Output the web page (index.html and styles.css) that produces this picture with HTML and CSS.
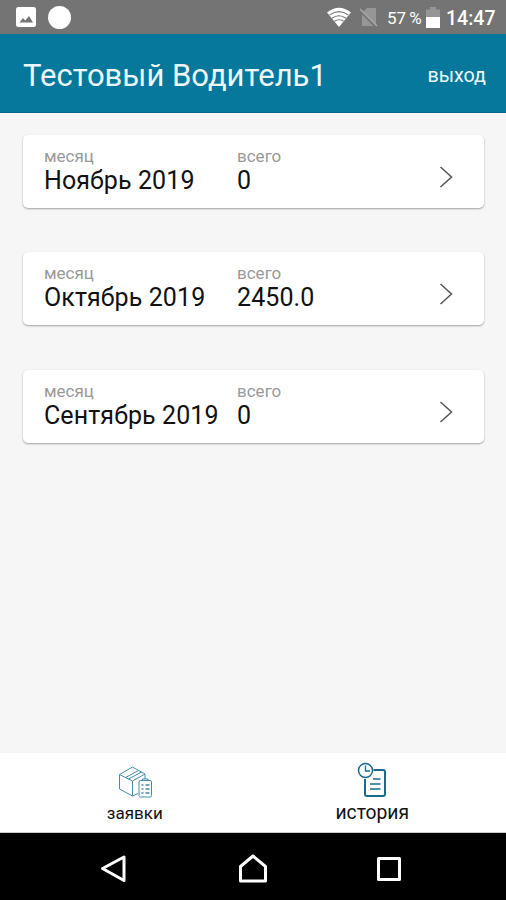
FILE: index.html
```html
<!DOCTYPE html>
<html lang="ru">
	<head>
		<meta charset="UTF-8" />
		<meta name="viewport" content="width=device-width, initial-scale=1.0" />
		<title>История</title>
		<link rel="stylesheet" href="styles.css">
	</head>
	<body>
		<div class="status-bar">
			<svg class="status-image" width="20" height="20" viewBox="0 0 20 20">
				<rect width="20" height="20" rx="2.5" fill="#fff" />
				<path d="M3.5 15.5 7 11l2.3 2.5L13 9l4 6.5z" fill="#747474" />
			</svg>
			<div class="status-dot"></div>
			<svg class="status-wifi" width="26" height="20" viewBox="0 0 26 20">
				<path d="M1 5.5Q13-4 25 5.5L13 20z" fill="#fff" />
				<path d="M3.5 8.1Q13 1.2 22.5 8.1M6 11.2Q13 6.2 20 11.2M8.5 14.2Q13 11.2 17.5 14.2" fill="none" stroke="#747474" stroke-width="1.1" />
			</svg>
			<svg class="status-sim" width="20" height="20" viewBox="0 0 20 20">
				<path d="M8 1h9v18H3V6z" fill="#969696" />
				<path d="M1 3.5 17 20" stroke="#747474" stroke-width="2.5" />
				<path d="M1 2 18 19" stroke="#a8a8a8" stroke-width="1.5" />
			</svg>
			<span class="status-percent">57 %</span>
			<svg class="status-battery" width="14" height="21" viewBox="0 0 14 21">
				<path d="M4 0h6v2.5h4V21H0V2.5h4z" fill="#969696" />
				<path d="M0 10h14v11H0z" fill="#fff" />
			</svg>
			<span class="status-time">14:47</span>
		</div>

		<div class="header">
			<h1>Тестовый Водитель1</h1>
			<a class="logout">выход</a>
		</div>

		<div class="content">
			<div class="card">
				<div class="month">
					<div class="label">месяц</div>
					<div class="value">Ноябрь 2019</div>
				</div>
				<div class="total">
					<div class="label">всего</div>
					<div class="value">0</div>
				</div>
				<svg class="arrow" width="14" height="22" viewBox="0 0 14 22">
					<path d="M1.5 1 12.5 11 1.5 21" />
				</svg>
			</div>
			<div class="card">
				<div class="month">
					<div class="label">месяц</div>
					<div class="value">Октябрь 2019</div>
				</div>
				<div class="total">
					<div class="label">всего</div>
					<div class="value">2450.0</div>
				</div>
				<svg class="arrow" width="14" height="22" viewBox="0 0 14 22">
					<path d="M1.5 1 12.5 11 1.5 21" />
				</svg>
			</div>
			<div class="card">
				<div class="month">
					<div class="label">месяц</div>
					<div class="value">Сентябрь 2019</div>
				</div>
				<div class="total">
					<div class="label">всего</div>
					<div class="value">0</div>
				</div>
				<svg class="arrow" width="14" height="22" viewBox="0 0 14 22">
					<path d="M1.5 1 12.5 11 1.5 21" />
				</svg>
			</div>
		</div>

		<div class="tabs">
			<div class="tab tab-orders">
				<svg width="36" height="36" viewBox="0 0 36 36" fill="none" stroke="#438ba8">
					<path d="M21 31.5 15.500 34 2.500 27V12.500L15.500 5 28 12v5M2.500 12.500l13 6.500L28 12M15.500 19v15M8.500 15.500 21.500 8.500M11.500 17 24.500 10" />
					<rect x="22" y="18.5" width="12.5" height="16.5" rx="1.5" />
					<path d="M25.5 18.5V17H31v1.5" />
					<path d="M24.5 23h2M28.5 23h4M24.5 27h2M28.5 27h4M24.5 31h2M28.5 31h4" stroke-width="1.5" />
				</svg>
				<span>заявки</span>
			</div>
			<div class="tab tab-history">
				<svg width="30" height="36" viewBox="0 0 30 36" fill="none" stroke="#17698f">
					<path d="M16.5 8H26a2 2 0 0 1 2 2v22a2 2 0 0 1-2 2H10a2 2 0 0 1-2-2V17" stroke-width="2" />
					<circle cx="8.5" cy="8.5" r="7" stroke-width="1.5" />
					<path d="M8.5 3.5V9H13" stroke-width="1.3" />
					<path d="M16 17h7.5M13 22h10.5M13 27h10.5" stroke-width="1.5" />
				</svg>
				<span>история</span>
			</div>
		</div>

		<div class="nav-bar">
			<svg width="28" height="30" viewBox="0 0 28 30">
				<path d="M25 3v23.5L3.5 14.5z" />
			</svg>
			<svg class="nav-home" width="30" height="30" viewBox="0 0 30 30">
				<path d="M15 2 27.5 12.5V27h-25V12.5z" />
			</svg>
			<svg width="26" height="26" viewBox="0 0 26 26">
				<rect x="2.5" y="2.5" width="21" height="21" />
			</svg>
		</div>
	</body>
</html>
```
FILE: styles.css
```css
body {
	display: flex;
	flex-direction: column;
	height: 900px;
	margin: 0;
	overflow: hidden;
	font-family: Roboto, sans-serif;
	background-color: #f6f6f6;
	color: #111;
}
svg {
	display: block;
	flex: none;
}
.status-bar {
	display: flex;
	align-items: center;
	box-sizing: border-box;
	height: 34px;
	padding: 0 11px 0 16px;
	background-color: #747474;
	color: #fff;
	white-space: nowrap;
}
.status-dot {
	width: 23px;
	height: 23px;
	margin-left: 12px;
	border-radius: 50%;
	background-color: #fff;
}
.status-wifi {
	margin-left: auto;
}
.status-sim {
	margin-left: 7px;
}
.status-percent {
	width: 35px;
	margin-left: 8px;
	margin-top: 2px;
	font-size: 17px;
	word-spacing: -1px;
}
.status-battery {
	margin-left: 4px;
}
.status-time {
	width: 49px;
	margin-left: 6px;
	margin-top: 2px;
	font-size: 19.5px;
	font-weight: 500;
}
.header {
	display: flex;
	align-items: center;
	justify-content: space-between;
	box-sizing: border-box;
	height: 79px;
	padding: 5px 20px 0 23px;
	border-bottom: 1px solid #07688a;
	background-color: #05789b;
	color: #eef8fc;
}
h1 {
	margin: 0;
	font-size: 31px;
	font-weight: 400;
}
.logout {
	font-size: 19.7px;
}
.content {
	flex: 1;
	display: flex;
	flex-direction: column;
	gap: 44.4px;
	padding: 22px 22px 0 23px;
}
.card {
	display: flex;
	box-sizing: border-box;
	height: 73px;
	padding: 11px 31px 0 21px;
	border-radius: 5px;
	background-color: #fff;
	box-shadow: 0 1px 2px rgba(0, 0, 0, 0.35);
}
.month {
	width: 193px;
}
.label {
	font-size: 17px;
	line-height: 20px;
	color: #999;
}
.value {
	margin-top: 1px;
	font-size: 25px;
	line-height: 28px;
	letter-spacing: 0.1px;
	white-space: nowrap;
}
.arrow {
	margin: 20px 0 0 auto;
	fill: none;
	stroke: #555;
	stroke-width: 1.5;
}
.tabs {
	display: flex;
	box-sizing: border-box;
	height: 80px;
	padding: 9px 15px 0 16px;
	border-bottom: 1px solid #ccc;
	background-color: #fff;
}
.tab {
	flex: 1;
	display: flex;
	flex-direction: column;
	align-items: center;
	line-height: 30px;
}
.tab-orders {
	font-size: 17px;
}
.tab-history {
	font-size: 19.3px;
}
.nav-bar {
	display: flex;
	align-items: center;
	justify-content: space-between;
	box-sizing: border-box;
	height: 67px;
	padding: 4px 104px 0 99px;
	background-color: #000;
}
.nav-bar svg {
	fill: none;
	stroke: #fff;
	stroke-width: 3;
	stroke-linejoin: round;
}
.nav-home {
	margin-left: 3px;
}
```
